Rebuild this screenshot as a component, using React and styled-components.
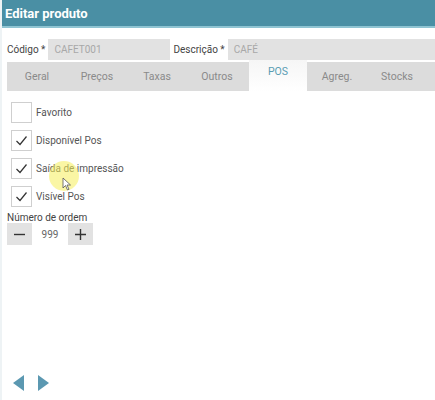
import React from 'react'
import styled, { createGlobalStyle } from 'styled-components'

const Global = createGlobalStyle`
  html, body {
    margin: 0;
    padding: 0;
    background: #fff;
    font-family: Roboto, "Liberation Sans", sans-serif;
  }
`

const Page = styled.div`
  position: relative;
  width: 435px;
  height: 400px;
  display: flex;
  flex-direction: column;
  overflow: hidden;
  border-left: 2px solid #eef3f5;
  box-sizing: border-box;
`

const Header = styled.header`
  height: 28px;
  background: #4a8fa4;
  border-bottom: 2px solid #8fc4d2;
  box-sizing: border-box;
  display: flex;
  align-items: center;
  padding-left: 3px;

  & h1 {
    margin: 0;
    font-size: 13px;
    font-weight: bold;
    color: #fff;
  }
`

const FieldRow = styled.div`
  display: flex;
  align-items: center;
  margin-top: 11px;
  padding-left: 5px;
  height: 21px;
`

const Label = styled.label`
  font-size: 10px;
  color: #444;
  margin-right: 3px;
  white-space: nowrap;
`

const Input = styled.div`
  height: 21px;
  background: #e2e2e2;
  color: #a8a8a8;
  font-size: 10px;
  display: flex;
  align-items: center;
  padding-left: 6px;
  box-sizing: border-box;
  width: ${(p) => p.w};
  margin-right: ${(p) => p.mr || 0};
  flex: ${(p) => (p.grow ? 1 : 'none')};
`

const TabBar = styled.div`
  display: flex;
  margin: 2px 0 0 5px;
  height: 29px;
  background: #dcdcdc;
`

const Tab = styled.div`
  width: 60px;
  flex: none;
  display: flex;
  justify-content: center;
  align-items: ${(p) => (p.active ? 'flex-start' : 'center')};
  font-size: 10.5px;
  color: ${(p) => (p.active ? '#5a9db3' : '#8a8a8a')};
  box-sizing: border-box;
  ${(p) =>
    p.active &&
    `
    background: linear-gradient(#f6f6f6, #ffffff);
    margin-top: -2px;
    height: 32px;
    padding-top: 5px;
    margin-left: 2px;
    width: 58px;
  `}
`

const Content = styled.div`
  display: flex;
  flex-direction: column;
  padding: 11px 0 0 9px;
  gap: 7px;
`

const CheckRow = styled.div`
  display: flex;
  align-items: center;
  gap: 4px;
`

const Box = styled.div`
  width: 21px;
  height: 21px;
  border: 1px solid #cfcfcf;
  box-sizing: border-box;
  background: #fff;
  display: flex;
  align-items: center;
  justify-content: center;
`

const CheckLabel = styled.span`
  font-size: 10px;
  color: #555;
`

const OrderLabel = styled.div`
  font-size: 10px;
  color: #444;
  margin: -2px 0 0 -4px;
`

const Stepper = styled.div`
  display: flex;
  height: 22px;
  margin: -7px 0 0 -4px;
`

const StepBtn = styled.div`
  width: 25px;
  background: #e2e2e2;
  display: flex;
  align-items: center;
  justify-content: center;
`

const StepValue = styled.div`
  width: 36px;
  display: flex;
  align-items: center;
  justify-content: center;
  font-size: 10px;
  color: #666;
`

const Nav = styled.div`
  position: absolute;
  left: 11px;
  bottom: 9px;
  display: flex;
  gap: 12px;
`

const Highlight = styled.div`
  position: absolute;
  left: 47px;
  top: 161px;
  width: 30px;
  height: 30px;
  border-radius: 50%;
  background: rgba(245, 238, 90, 0.55);
  pointer-events: none;
`

const Cursor = styled.svg`
  position: absolute;
  left: 60px;
  top: 177px;
`

const Check = () => (
  <svg width="13" height="11" viewBox="0 0 13 11">
    <path d="M1.5 6 L5 9.5 L11.5 1.5" fill="none" stroke="#333" strokeWidth="1.2" />
  </svg>
)

const Minus = () => (
  <svg width="11" height="11" viewBox="0 0 11 11">
    <path d="M0 5.5 H11" stroke="#333" strokeWidth="1.4" />
  </svg>
)

const Plus = () => (
  <svg width="11" height="11" viewBox="0 0 11 11">
    <path d="M0 5.5 H11 M5.5 0 V11" stroke="#333" strokeWidth="1.4" />
  </svg>
)

const tabs = ['Geral', 'Preços', 'Taxas', 'Outros', 'POS', 'Agreg.', 'Stocks']
const checks = [
  { label: 'Favorito', on: false },
  { label: 'Disponível Pos', on: true },
  { label: 'Saída de impressão', on: true },
  { label: 'Visível Pos', on: true },
]

export default function App() {
  return (
    <Page>
      <Global />
      <Header>
        <h1>Editar produto</h1>
      </Header>
      <FieldRow>
        <Label>Código *</Label>
        <Input w="122px" mr="3px">CAFET001</Input>
        <Label>Descrição *</Label>
        <Input grow>CAFÉ</Input>
      </FieldRow>
      <TabBar>
        {tabs.map((t) => (
          <Tab key={t} active={t === 'POS'}>
            {t}
          </Tab>
        ))}
      </TabBar>
      <Content>
        {checks.map((c) => (
          <CheckRow key={c.label}>
            <Box>{c.on && <Check />}</Box>
            <CheckLabel>{c.label}</CheckLabel>
          </CheckRow>
        ))}
        <OrderLabel>Número de ordem</OrderLabel>
        <Stepper>
          <StepBtn>
            <Minus />
          </StepBtn>
          <StepValue>999</StepValue>
          <StepBtn>
            <Plus />
          </StepBtn>
        </Stepper>
      </Content>
      <Nav>
        <svg width="12" height="16" viewBox="0 0 12 16">
          <path d="M11 0 L11 16 L0 8 Z" fill="#5b98b1" />
        </svg>
        <svg width="12" height="16" viewBox="0 0 12 16">
          <path d="M1 0 L1 16 L12 8 Z" fill="#5b98b1" />
        </svg>
      </Nav>
      <Highlight />
      <Cursor width="10" height="14" viewBox="0 0 10 14">
        <path d="M1 1 L1 11 L3.5 8.5 L5.5 13 L7 12.3 L5 8 L8.5 8 Z" fill="#fff" stroke="#555" strokeWidth="0.8" />
      </Cursor>
    </Page>
  )
}
